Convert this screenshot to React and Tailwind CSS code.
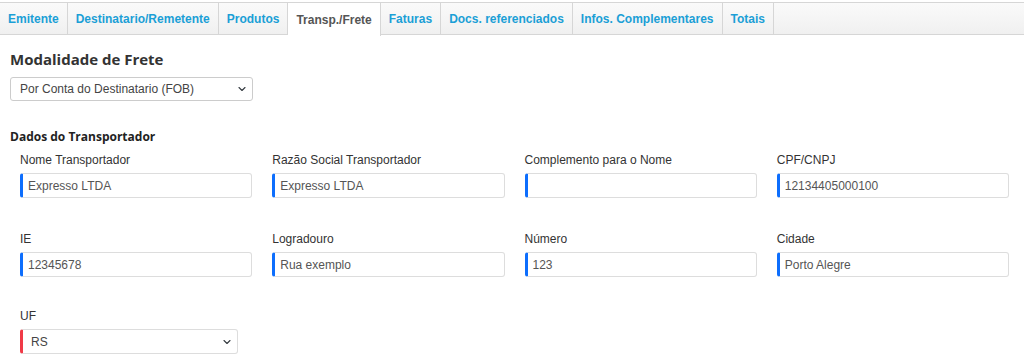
import React from "react";

const tabs = [
  "Emitente",
  "Destinatario/Remetente",
  "Produtos",
  "Transp./Frete",
  "Faturas",
  "Docs. referenciados",
  "Infos. Complementares",
  "Totais",
];

const fields = [
  { label: "Nome Transportador", value: "Expresso LTDA" },
  { label: "Razão Social Transportador", value: "Expresso LTDA" },
  { label: "Complemento para o Nome", value: "" },
  { label: "CPF/CNPJ", value: "12134405000100" },
  { label: "IE", value: "12345678" },
  { label: "Logradouro", value: "Rua exemplo" },
  { label: "Número", value: "123" },
  { label: "Cidade", value: "Porto Alegre" },
];

function Chevron() {
  return (
    <svg width="8" height="8" viewBox="0 0 16 16" className="text-[#343a40]">
      <path
        d="M2 5l6 6 6-6"
        fill="none"
        stroke="currentColor"
        strokeWidth="2.2"
        strokeLinecap="round"
        strokeLinejoin="round"
      />
    </svg>
  );
}

function Field({ label, value }) {
  return (
    <div className="flex flex-col">
      <label className="text-[12px] leading-[14px] text-[#333] mb-[6px]">{label}</label>
      <div className="h-[25px] border border-[#ddd] border-l-[3px] border-l-[#0d6efd] rounded-[3px] flex items-center pl-[5px] text-[12px] text-[#555] bg-white">
        {value}
      </div>
    </div>
  );
}

export default function App() {
  return (
    <div className="w-[1024px] h-[359px] bg-white font-['Liberation_Sans',Arial,sans-serif] overflow-hidden">
      {/* Tabs */}
      <div className="mt-[2px] flex h-[33px] border-t border-b border-[#d6d6d6] bg-gradient-to-b from-[#fafafa] to-[#f0f0f0]">
        {tabs.map((tab) => {
          const active = tab === "Transp./Frete";
          return (
            <div
              key={tab}
              className={`px-[8px] flex items-center text-[12px] font-bold border-r border-[#d6d6d6] ${
                active ? "bg-white text-[#555] h-[33px] -mb-px" : "text-[#1b9fd6]"
              }`}
            >
              {tab}
            </div>
          );
        })}
      </div>

      <div className="px-[10px]">
        <h2 className="mt-[13px] text-[15px] leading-[22px] font-bold text-[#333] font-['Open_Sans',sans-serif]">
          Modalidade de Frete
        </h2>
        <div className="mt-[7px] w-[243px] h-[24px] border border-[#ccc] rounded-[3px] flex items-center justify-between pl-[9px] pr-[6px] text-[12px] text-[#444]">
          <span>Por Conta do Destinatario (FOB)</span>
          <Chevron />
        </div>

        <h3 className="mt-[28px] text-[12px] leading-[16px] font-bold text-[#222] font-['Open_Sans',sans-serif]">
          Dados do Transportador
        </h3>

        <div className="pl-[10px] pr-[5px] mt-[8px] grid grid-cols-4 gap-x-[20px] gap-y-[34px]">
          {fields.map((f) => (
            <Field key={f.label} label={f.label} value={f.value} />
          ))}
          <div className="flex flex-col -mt-[2px]">
            <label className="text-[12px] leading-[14px] text-[#333] mb-[6px]">UF</label>
            <div className="w-[218px] h-[25px] border border-[#ddd] border-l-[3px] border-l-[#f03a47] rounded-[3px] flex items-center justify-between pl-[8px] pr-[6px] text-[12px] text-[#444]">
              <span>RS</span>
              <Chevron />
            </div>
          </div>
        </div>
      </div>
    </div>
  );
}
